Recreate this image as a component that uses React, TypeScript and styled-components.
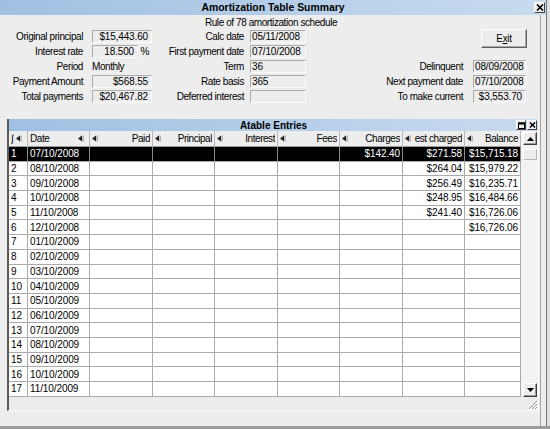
import React from 'react'
import styled, { createGlobalStyle } from 'styled-components'

const GlobalStyle = createGlobalStyle`
  html, body {
    margin: 0;
    padding: 0;
  }
  body {
    background: #e4e4e4;
    font-family: "Liberation Sans", Arial, sans-serif;
    font-size: 10px;
    color: #000;
  }
  * {
    box-sizing: border-box;
  }
`

const Screen = styled.div`
  width: 550px;
  height: 429px;
  display: flex;
  flex-direction: column;
  overflow: hidden;
`

const Desk = styled.div`
  flex: 1;
  display: flex;
  min-height: 0;
`

const Dialog = styled.div`
  width: 547px;
  display: flex;
  flex-direction: column;
  background: #ededed;
  border-right: 1px solid #767676;
`

const BackWindow = styled.div`
  flex: 1;
  background: #e2e2e2;
`

const TaskEdge = styled.div`
  height: 3px;
  background: #9b9b9b;
`

const TitleBar = styled.div<{ $h: number }>`
  height: ${p => p.$h}px;
  display: grid;
  grid-template-columns: 1fr auto 1fr;
  align-items: center;
  background: linear-gradient(to right, #a0c0e2, #c8dbef);
  font-weight: bold;
  font-size: ${p => (p.$h > 13 ? 10.4 : 10)}px;
  white-space: nowrap;
`

const TitleButtons = styled.div`
  justify-self: end;
  display: flex;
  gap: 1px;
  margin-right: 1px;
`

const WinButton = styled.span<{ $size: number }>`
  width: ${p => p.$size}px;
  height: ${p => p.$size}px;
  display: flex;
  align-items: center;
  justify-content: center;
  background: #ececec;
  border: 1px solid;
  border-color: #fff #404040 #404040 #fff;
`

const Body = styled.div`
  flex: 1;
  margin-right: 5px;
  border-right: 1px solid #a4a4a4;
  display: flex;
  flex-direction: column;
`

const Subtitle = styled.div`
  height: 13px;
  display: flex;
  align-items: center;
  justify-content: center;
  letter-spacing: -0.42px;
  padding: 1px 0 0 2px;
`

const Form = styled.div`
  display: grid;
  grid-template-columns: 92px 60px 98px 56px 167px 53px;
  grid-auto-rows: 15px;
  margin-top: 1px;
`

const Label = styled.div<{ $gap: number }>`
  display: flex;
  align-items: center;
  justify-content: flex-end;
  padding-right: ${p => p.$gap}px;
  white-space: nowrap;
  letter-spacing: -0.42px;
`

const Field = styled.div<{ $right?: boolean }>`
  align-self: center;
  height: 13px;
  display: flex;
  align-items: center;
  justify-content: ${p => (p.$right ? 'flex-end' : 'flex-start')};
  padding: 0 3px 0 1px;
  border: 1px solid;
  border-color: #aaaaaa #fbfbfb #fbfbfb #aaaaaa;
  background: #ededed;
  white-space: nowrap;
  letter-spacing: -0.15px;
`

const RateBox = styled.div`
  display: flex;
  align-items: center;

  & > ${Field} {
    flex: 1;
  }
`

const Unit = styled.span`
  width: 14px;
  text-align: center;
`

const PlainValue = styled.div`
  display: flex;
  align-items: center;
  letter-spacing: -0.42px;
`

const ExitButton = styled.button`
  grid-row: span 2;
  justify-self: end;
  align-self: start;
  width: 46px;
  height: 19px;
  margin-right: -1px;
  padding: 0;
  background: #ededed;
  border: 1px solid;
  border-color: #fff #5e5e5e #5e5e5e #fff;
  box-shadow: inset -1px -1px 0 #a8a8a8;
  font: inherit;
  letter-spacing: -0.3px;
  color: #000;
`

const Panel = styled.section`
  margin: 15px 0 0 7px;
  width: 532px;
  display: flex;
  flex-direction: column;
  border-left: 2px solid #5a5a5a;
  border-right: 1px solid #fafafa;
  border-bottom: 1px solid #fafafa;
`

const GridArea = styled.div`
  display: flex;
`

const Table = styled.div`
  display: grid;
  grid-template-columns: 19px 62px 63px 62px 63px 62px 63px 62px 56px;
  grid-template-rows: 16px repeat(17, 14.7px);
  background: #fff;
`

const HeadCell = styled.div<{ $right?: boolean; $tight?: boolean }>`
  display: flex;
  align-items: center;
  gap: ${p => (p.$tight ? 0 : 2)}px;
  padding: ${p => (p.$right ? '0 2px 0 2px' : '0 5px 0 2px')};
  background: #ededed;
  border-right: 1px solid #b8b8b8;
  border-bottom: 1px solid #9c9c9c;
  overflow: hidden;
  white-space: nowrap;
`

const HeadLabel = styled.span<{ $right?: boolean }>`
  flex: 1;
  min-width: 0;
  display: flex;
  justify-content: ${p => (p.$right ? 'flex-end' : 'flex-start')};
  overflow: hidden;
  letter-spacing: -0.45px;
`

const ArrowMark = styled.svg`
  flex-shrink: 0;
`

const Cell = styled.div<{ $right?: boolean; $sel?: boolean }>`
  display: flex;
  align-items: center;
  justify-content: ${p => (p.$right ? 'flex-end' : 'flex-start')};
  padding: 0 2px;
  border-right: 1px solid ${p => (p.$sel ? '#8a8a8a' : '#ababab')};
  border-bottom: 1px solid #ababab;
  background: ${p => (p.$sel ? '#000' : '#fff')};
  color: ${p => (p.$sel ? '#fff' : '#000')};
  white-space: nowrap;
  overflow: hidden;
  letter-spacing: -0.1px;
`

const ScrollBar = styled.div`
  width: 17px;
  display: flex;
  flex-direction: column;
  align-items: flex-start;
  padding-left: 2px;
  background: #f3f3f3;
`

const ScrollButton = styled.div<{ $h: number; $top?: string }>`
  width: 14px;
  height: ${p => p.$h}px;
  margin-top: ${p => p.$top || '0'};
  display: flex;
  align-items: center;
  justify-content: center;
  background: #ececec;
  border: 1px solid;
  border-color: #fff #3c3c3c #3c3c3c #fff;
  box-shadow: inset -1px -1px 0 #9a9a9a;
`

const Thumb = styled.div`
  width: 14px;
  height: 11px;
  margin-top: 4px;
  background: #ececec;
  border: 1px solid;
  border-color: #fff #b5b5b5 #b5b5b5 #fff;
`

const PanelFooter = styled.div`
  height: 13px;
  display: flex;
  justify-content: flex-end;
  align-items: flex-end;
  background: #ececec;
`

// the last-but-one header is too narrow for its full title, only its tail shows
const headers = [
  { label: '∫', right: false },
  { label: 'Date', right: false },
  { label: 'Paid', right: true },
  { label: 'Principal', right: true },
  { label: 'Interest', right: true },
  { label: 'Fees', right: true },
  { label: 'Charges', right: true },
  { label: 'est charged', right: true, tight: true },
  { label: 'Balance', right: true },
]

const dates = [
  '07/10/2008', '08/10/2008', '09/10/2008', '10/10/2008', '11/10/2008', '12/10/2008',
  '01/10/2009', '02/10/2009', '03/10/2009', '04/10/2009', '05/10/2009', '06/10/2009',
  '07/10/2009', '08/10/2009', '09/10/2009', '10/10/2009', '11/10/2009',
]

const amounts: Record<number, [string, string, string]> = {
  0: ['$142.40', '$271.58', '$15,715.18'],
  1: ['', '$264.04', '$15,979.22'],
  2: ['', '$256.49', '$16,235.71'],
  3: ['', '$248.95', '$16,484.66'],
  4: ['', '$241.40', '$16,726.06'],
  5: ['', '', '$16,726.06'],
}

const SortArrow = () => (
  <ArrowMark width="6" height="7" viewBox="0 0 6 7">
    <path d="M0 3.5 L4 0.5 V6.5 Z" fill="#222" />
    <rect x="4.6" y="0.5" width="1" height="6" fill="#8a8a8a" />
  </ArrowMark>
)

const CloseGlyph = ({ s }: { s: number }) => (
  <svg width={s} height={s - 1} viewBox="0 0 8 7">
    <path d="M1 0.5 L7 6.5 M7 0.5 L1 6.5" stroke="#000" strokeWidth="1.6" />
  </svg>
)

const RestoreGlyph = () => (
  <svg width="7" height="7" viewBox="0 0 7 7">
    <rect x="0.5" y="1" width="6" height="5.5" fill="none" stroke="#000" strokeWidth="1" />
    <rect x="0" y="0.5" width="7" height="2" fill="#000" />
  </svg>
)

const Triangle = ({ up }: { up?: boolean }) => (
  <svg width="7" height="4" viewBox="0 0 7 4">
    <path d={up ? 'M0 4 L3.5 0 L7 4 Z' : 'M0 0 L3.5 4 L7 0 Z'} fill="#000" />
  </svg>
)

const Grip = () => (
  <svg width="11" height="11" viewBox="0 0 11 11">
    <path d="M10 2 L2 10 M10 5 L5 10 M10 8 L8 10" stroke="#9a9a9a" strokeWidth="1" />
    <path d="M11 3 L3 11 M11 6 L6 11 M11 9 L9 11" stroke="#fff" strokeWidth="1" />
  </svg>
)

export default function App() {
  return (
    <>
      <GlobalStyle />
      <Screen>
        <Desk>
          <Dialog>
            <TitleBar $h={15}>
              <span />
              <span>Amortization Table Summary</span>
              <TitleButtons>
                <WinButton $size={11}>
                  <CloseGlyph s={8} />
                </WinButton>
              </TitleButtons>
            </TitleBar>
            <Body>
              <Subtitle>Rule of 78 amortization schedule</Subtitle>
              <Form>
                <Label $gap={9}>Original principal</Label>
                <Field $right>$15,443.60</Field>
                <Label $gap={6}>Calc date</Label>
                <Field>05/11/2008</Field>
                <span />
                <ExitButton>
                  E<u>x</u>it
                </ExitButton>

                <Label $gap={9}>Interest rate</Label>
                <RateBox>
                  <Field $right>18.500</Field>
                  <Unit>%</Unit>
                </RateBox>
                <Label $gap={6}>First payment date</Label>
                <Field>07/10/2008</Field>
                <span />

                <Label $gap={9}>Period</Label>
                <PlainValue>Monthly</PlainValue>
                <Label $gap={6}>Term</Label>
                <Field>36</Field>
                <Label $gap={10}>Delinquent</Label>
                <Field>08/09/2008</Field>

                <Label $gap={9}>Payment Amount</Label>
                <Field $right>$568.55</Field>
                <Label $gap={6}>Rate basis</Label>
                <Field>365</Field>
                <Label $gap={10}>Next payment date</Label>
                <Field>07/10/2008</Field>

                <Label $gap={9}>Total payments</Label>
                <Field $right>$20,467.82</Field>
                <Label $gap={6}>Deferred interest</Label>
                <Field />
                <Label $gap={10}>To make current</Label>
                <Field $right>$3,553.70</Field>
              </Form>

              <Panel>
                <TitleBar $h={12}>
                  <span />
                  <span>Atable Entries</span>
                  <TitleButtons>
                    <WinButton $size={10}>
                      <RestoreGlyph />
                    </WinButton>
                    <WinButton $size={10}>
                      <CloseGlyph s={7} />
                    </WinButton>
                  </TitleButtons>
                </TitleBar>
                <GridArea>
                  <Table>
                    {headers.map(h => (
                      <HeadCell key={h.label} $right={h.right} $tight={h.tight}>
                        {h.right && <SortArrow />}
                        <HeadLabel $right={h.right}>{h.label}</HeadLabel>
                        {!h.right && <SortArrow />}
                      </HeadCell>
                    ))}
                    {dates.map((d, i) => {
                      const sel = i === 0
                      const [charges, ic, bal] = amounts[i] || ['', '', '']
                      return (
                        <React.Fragment key={d}>
                          <Cell $sel={sel}>{i + 1}</Cell>
                          <Cell $sel={sel}>{d}</Cell>
                          <Cell $sel={sel} $right />
                          <Cell $sel={sel} $right />
                          <Cell $sel={sel} $right />
                          <Cell $sel={sel} $right />
                          <Cell $sel={sel} $right>{charges}</Cell>
                          <Cell $sel={sel} $right>{ic}</Cell>
                          <Cell $sel={sel} $right>{bal}</Cell>
                        </React.Fragment>
                      )
                    })}
                  </Table>
                  <ScrollBar>
                    <ScrollButton $h={13} $top="1px">
                      <Triangle up />
                    </ScrollButton>
                    <Thumb />
                    <ScrollButton $h={14} $top="auto">
                      <Triangle />
                    </ScrollButton>
                  </ScrollBar>
                </GridArea>
                <PanelFooter>
                  <Grip />
                </PanelFooter>
              </Panel>
            </Body>
          </Dialog>
          <BackWindow />
        </Desk>
        <TaskEdge />
      </Screen>
    </>
  )
}
